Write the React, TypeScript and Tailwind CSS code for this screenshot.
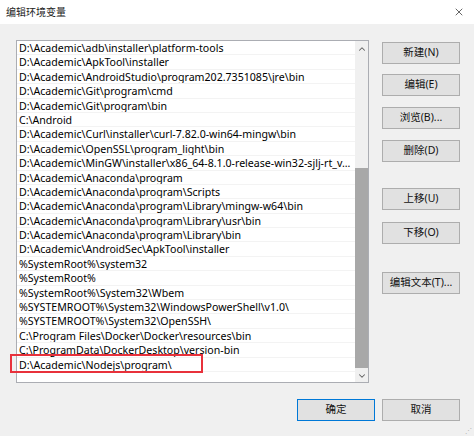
import { ChevronUp, ChevronDown, X } from "lucide-react";

const paths = [
  "D:\\Academic\\adb\\installer\\platform-tools",
  "D:\\Academic\\ApkTool\\installer",
  "D:\\Academic\\AndroidStudio\\program202.7351085\\jre\\bin",
  "D:\\Academic\\Git\\program\\cmd",
  "D:\\Academic\\Git\\program\\bin",
  "C:\\Android",
  "D:\\Academic\\Curl\\installer\\curl-7.82.0-win64-mingw\\bin",
  "D:\\Academic\\OpenSSL\\program_light\\bin",
  "D:\\Academic\\MinGW\\installer\\x86_64-8.1.0-release-win32-sjlj-rt_v...",
  "D:\\Academic\\Anaconda\\program",
  "D:\\Academic\\Anaconda\\program\\Scripts",
  "D:\\Academic\\Anaconda\\program\\Library\\mingw-w64\\bin",
  "D:\\Academic\\Anaconda\\program\\Library\\usr\\bin",
  "D:\\Academic\\Anaconda\\program\\Library\\bin",
  "D:\\Academic\\AndroidSec\\ApkTool\\installer",
  "%SystemRoot%\\system32",
  "%SystemRoot%",
  "%SystemRoot%\\System32\\Wbem",
  "%SYSTEMROOT%\\System32\\WindowsPowerShell\\v1.0\\",
  "%SYSTEMROOT%\\System32\\OpenSSH\\",
  "C:\\Program Files\\Docker\\Docker\\resources\\bin",
  "C:\\ProgramData\\DockerDesktop\\version-bin",
  "D:\\Academic\\Nodejs\\program\\",
];

function Btn({ label, primary }: { label: string; primary?: boolean }) {
  return (
    <button
      className={
        "w-[78px] h-[22px] bg-[#e1e1e1] border text-[10.5px] text-[#111] flex items-center justify-center " +
        (primary ? "border-[#0078d7]" : "border-[#adadad]")
      }
    >
      {label}
    </button>
  );
}

export default function App() {
  return (
    <div
      className="relative w-[474px] h-[436px] bg-[#f0f0f0] overflow-hidden"
      style={{ fontFamily: '"Noto Sans", "Noto Sans CJK SC", sans-serif' }}
    >
      {/* title bar */}
      <div className="h-[24px] bg-white flex items-center justify-between pl-[6px] pr-[9px]">
        <span className="text-[10px] text-[#222]">编辑环境变量</span>
        <X size={12} strokeWidth={1.5} className="text-[#333]" />
      </div>

      <div className="flex pt-[16px] pl-[16px]">
        {/* list */}
        <div className="w-[353px] h-[343px] border border-[#abadb3] bg-white flex">
          <div className="flex-1">
            {paths.map((p) => (
              <div
                key={p}
                className="h-[14.4px] leading-[14px] pl-[2px] text-[10.6px] text-black border-b border-[#f3f3f3] whitespace-nowrap overflow-hidden"
              >
                {p}
              </div>
            ))}
          </div>
          <div className="w-[13px] bg-[#f0f0f0] flex flex-col items-center">
            <ChevronUp size={10} strokeWidth={2.5} className="text-[#606060] mt-[3px]" />
            <div className="w-[13px] h-[200px] bg-[#a8a8a8] mt-[114px]" />
            <ChevronDown size={10} strokeWidth={2.5} className="text-[#606060] mt-[3px]" />
          </div>
        </div>

        {/* side buttons */}
        <div className="ml-[13px] mt-[2px] flex flex-col">
          <Btn label="新建(N)" />
          <div className="mt-[10px]"><Btn label="编辑(E)" /></div>
          <div className="mt-[11px]"><Btn label="浏览(B)..." /></div>
          <div className="mt-[11px]"><Btn label="删除(D)" /></div>
          <div className="mt-[26px]"><Btn label="上移(U)" /></div>
          <div className="mt-[12px]"><Btn label="下移(O)" /></div>
          <div className="mt-[28px]"><Btn label="编辑文本(T)..." /></div>
        </div>
      </div>

      {/* footer */}
      <div className="flex justify-end gap-[7px] pr-[14px] mt-[16px]">
        <Btn label="确定" primary />
        <Btn label="取消" />
      </div>

      {/* red highlight annotation */}
      <div className="absolute left-[10px] top-[354px] w-[193px] h-[19px] border-2 border-[#e8313b]" />

      {/* resize grip */}
      <div className="absolute right-[2px] bottom-[2px] text-[7px] leading-none text-[#b0b0b0]">⋰</div>
    </div>
  );
}
